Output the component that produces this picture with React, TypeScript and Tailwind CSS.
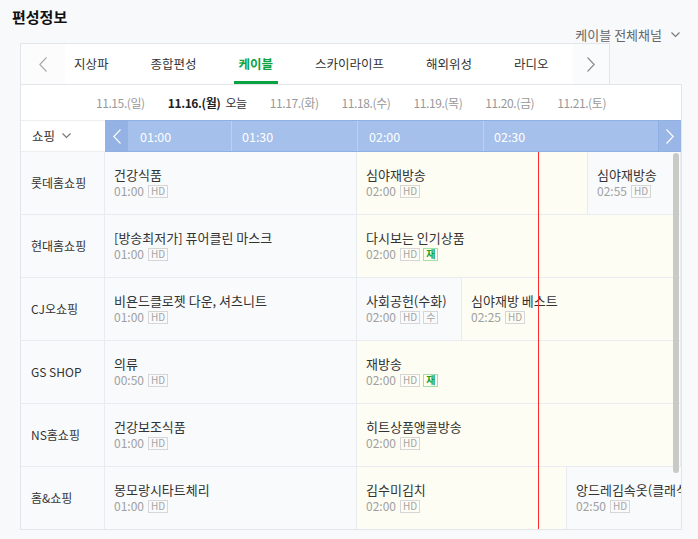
import React from 'react'

type Program = {
  title: string
  start: number // minutes from 00:00
  tags?: string[]
}

type Channel = {
  name: string
  programs: Program[]
}

const PX_PER_MIN = 4.2
const VIEW_START = 60 // 01:00
const NOW = 163 // 02:43

const TABS = ['지상파', '종합편성', '케이블', '스카이라이프', '해외위성', '라디오']
const DATES = ['11.15.(일)', '11.16.(월)', '11.17.(화)', '11.18.(수)', '11.19.(목)', '11.20.(금)', '11.21.(토)']

const CHANNELS: Channel[] = [
  {
    name: '롯데홈쇼핑',
    programs: [
      { title: '건강식품', start: 60, tags: ['HD'] },
      { title: '심야재방송', start: 120, tags: ['HD'] },
      { title: '심야재방송', start: 175, tags: ['HD'] },
    ],
  },
  {
    name: '현대홈쇼핑',
    programs: [
      { title: '[방송최저가] 퓨어클린 마스크', start: 60, tags: ['HD'] },
      { title: '다시보는 인기상품', start: 120, tags: ['HD', '재'] },
    ],
  },
  {
    name: 'CJ오쇼핑',
    programs: [
      { title: '비욘드클로젯 다운, 셔츠니트', start: 60, tags: ['HD'] },
      { title: '사회공헌(수화)', start: 120, tags: ['HD', '수'] },
      { title: '심야재방 베스트', start: 145, tags: ['HD'] },
    ],
  },
  {
    name: 'GS SHOP',
    programs: [
      { title: '의류', start: 50, tags: ['HD'] },
      { title: '재방송', start: 120, tags: ['HD', '재'] },
    ],
  },
  {
    name: 'NS홈쇼핑',
    programs: [
      { title: '건강보조식품', start: 60, tags: ['HD'] },
      { title: '히트상품앵콜방송', start: 120, tags: ['HD'] },
    ],
  },
  {
    name: '홈&쇼핑',
    programs: [
      { title: '몽모랑시타트체리', start: 60, tags: ['HD'] },
      { title: '김수미김치', start: 120, tags: ['HD'] },
      { title: '앙드레김속옷(클래식)', start: 170, tags: ['HD'] },
    ],
  },
]

const fmt = (m: number) => `${String(Math.floor(m / 60)).padStart(2, '0')}:${String(m % 60).padStart(2, '0')}`

function Chevron({ dir, className }: { dir: 'left' | 'right' | 'down'; className?: string }) {
  if (dir === 'down') {
    return (
      <svg width="9" height="6" viewBox="0 0 9 6" className={className}>
        <polyline points="0.5,0.5 4.5,4.5 8.5,0.5" fill="none" stroke="currentColor" strokeWidth="1.1" />
      </svg>
    )
  }
  const pts = dir === 'left' ? '7.5,0.5 0.8,7.5 7.5,14.5' : '0.5,0.5 7.2,7.5 0.5,14.5'
  return (
    <svg width="8" height="15" viewBox="0 0 8 15" className={className}>
      <polyline points={pts} fill="none" stroke="currentColor" strokeWidth="1.1" />
    </svg>
  )
}

function Tag({ label }: { label: string }) {
  const isRe = label === '재'
  return (
    <span
      className={`inline-flex h-[13px] items-center border px-[2px] text-[10px] leading-none ${
        isRe ? 'border-[#a3e0a3] font-bold text-[#18a018]' : 'border-[#d6d6d6] text-[#a5a5a5]'
      }`}
    >
      {label}
    </span>
  )
}

function ProgramCell({ program, end }: { program: Program; end: number | null }) {
  const left = Math.max(program.start, VIEW_START)
  const width = end === null ? undefined : (end - left) * PX_PER_MIN
  const isNow = program.start <= NOW && (end === null || end > NOW)
  return (
    <div
      className={`flex shrink-0 flex-col justify-center border-r border-[#e8ebf0] pl-[9px] ${
        isNow ? 'bg-[#fdfdf3]' : 'bg-[#f9fafc]'
      } ${end === null ? 'flex-1' : ''}`}
      style={width !== undefined ? { width } : undefined}
    >
      <div className="whitespace-nowrap text-[13px] leading-[16px] text-[#333]">{program.title}</div>
      <div className="flex items-center gap-[3px] whitespace-nowrap">
        <span className="mr-[1px] text-[12px] leading-[16px] text-[#a0a0a0]">{fmt(program.start)}</span>
        {program.tags?.map((t) => (
          <Tag key={t} label={t} />
        ))}
      </div>
    </div>
  )
}

export default function App() {
  const nowLeft = (NOW - VIEW_START) * PX_PER_MIN

  return (
    <div className="h-[539px] w-[698px] overflow-hidden bg-[#f8f9fb] font-['Noto_Sans_CJK_KR','Noto_Sans',sans-serif] text-[#333]">
      {/* Header */}
      <div className="flex h-[43px] items-start justify-between pl-[12px] pr-[18px]">
        <h1 className="pt-[7px] text-[15px] font-bold leading-[20px] text-[#111]">편성정보</h1>
        <div className="mt-[26px] flex items-center gap-[9px] text-[13px] leading-[17px] text-[#666]">
          <span>케이블 전체채널</span>
          <Chevron dir="down" className="text-[#777]" />
        </div>
      </div>

      {/* Tabs */}
      <div className="ml-[20px] flex h-[41px] w-[590px] border-x border-t border-[#e3e5ea] bg-white">
        <div className="flex w-[44px] items-center justify-center bg-[#fcfcfd] text-[#a8a8a8]">
          <Chevron dir="left" />
        </div>
        <div className="flex flex-1 items-stretch gap-[32px] pl-[4px]">
          {TABS.map((tab) => {
            const active = tab === '케이블'
            return (
              <div
                key={tab}
                className={`flex items-center border-b-[3px] px-[5px] pt-[3px] text-[12.5px] ${
                  active ? 'border-[#0ba341] font-bold text-[#0ba341]' : 'border-transparent text-[#333]'
                }`}
              >
                {tab}
              </div>
            )
          })}
        </div>
        <div className="flex w-[36px] items-center justify-center bg-[#fafbfc] text-[#888]">
          <Chevron dir="right" />
        </div>
      </div>

      {/* Schedule box */}
      <div className="ml-[20px] w-[662px] border border-[#e3e5ea] bg-white">
        {/* Dates */}
        <div className="flex h-[35px] items-center justify-center gap-[23px] text-[12px] tracking-[-0.4px] text-[#999]">
          {DATES.map((d) =>
            d === '11.16.(월)' ? (
              <span key={d} className="flex items-center gap-[5px]">
                <span className="font-bold text-[#222]">{d}</span>
                <span className="text-[#333]">오늘</span>
              </span>
            ) : (
              <span key={d}>{d}</span>
            )
          )}
        </div>

        {/* Timeline header */}
        <div className="flex h-[32px]">
          <div className="flex w-[84px] shrink-0 items-center gap-[7px] border-y border-[#eceef2] pl-[11px] text-[12.5px] text-[#333]">
            <span>쇼핑</span>
            <Chevron dir="down" className="text-[#777]" />
          </div>
          <div className="flex flex-1 border-y border-[#8fb0e2] bg-[#a5c0ea] text-[12.5px] text-white">
            <div className="flex w-[23px] items-center justify-center bg-[#94b2e4] text-white">
              <Chevron dir="left" />
            </div>
            <div className="flex w-[103px] items-center pl-[12px] pt-[2px]">01:00</div>
            <div className="flex w-[126px] items-center border-l border-[#bcd0f1] pl-[10px] pt-[2px]">01:30</div>
            <div className="flex w-[126px] items-center border-l border-[#bcd0f1] pl-[11px] pt-[2px]">02:00</div>
            <div className="flex flex-1 items-center border-l border-[#bcd0f1] pl-[10px] pt-[2px]">02:30</div>
            <div className="flex w-[23px] items-center justify-center border-l border-[#8fb0e2] bg-[#9ab6e6] text-white">
              <Chevron dir="right" />
            </div>
          </div>
        </div>

        {/* Rows */}
        <div className="flex">
          <div className="w-[84px] shrink-0 border-r border-[#e8ebf0] bg-[#f9fafc]">
            {CHANNELS.map((ch, i) => (
              <div
                key={ch.name}
                className={`flex items-center pl-[10px] text-[12px] text-[#333] ${
                  i < CHANNELS.length - 1 ? 'h-[63px] border-b border-[#e8ebf0]' : 'h-[62px]'
                }`}
              >
                {ch.name}
              </div>
            ))}
          </div>
          <div className="relative w-[576px] overflow-hidden">
            {CHANNELS.map((ch, i) => (
              <div
                key={ch.name}
                className={`flex ${i < CHANNELS.length - 1 ? 'h-[63px] border-b border-[#e8ebf0]' : 'h-[62px]'}`}
              >
                {ch.programs.map((p, j) => {
                  const next = ch.programs[j + 1]
                  return <ProgramCell key={j} program={p} end={next ? next.start : null} />
                })}
              </div>
            ))}
            <div className="absolute bottom-0 top-0 w-px bg-[#ff2b2b]" style={{ left: nowLeft }} />
            <div className="absolute right-[2px] top-[1px] h-[320px] w-[6px] rounded-full bg-[#c9c9c6]" />
          </div>
        </div>
      </div>
    </div>
  )
}
